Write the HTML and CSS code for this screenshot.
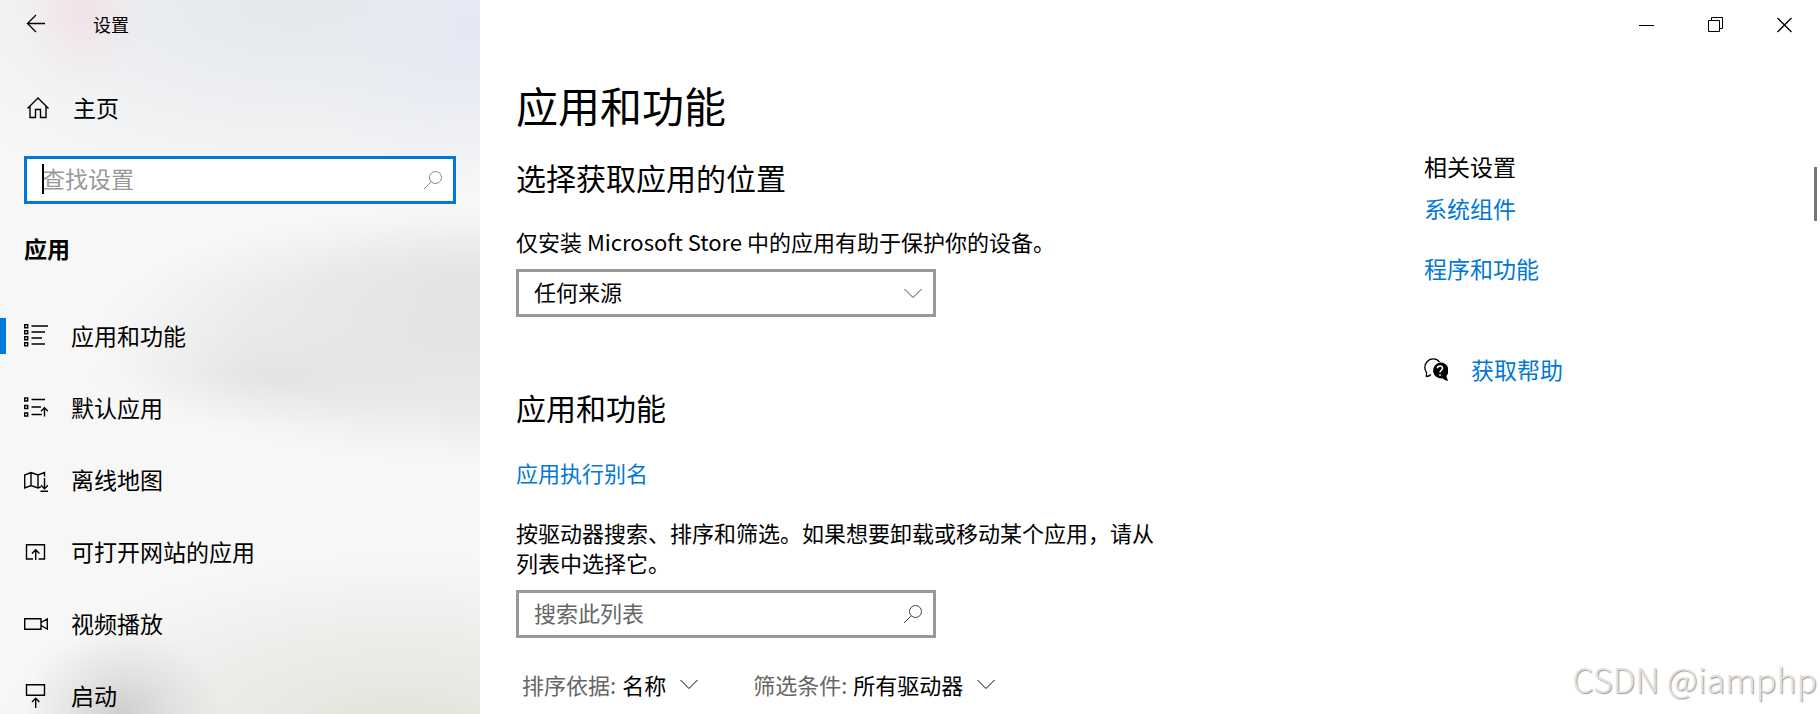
FILE: index.html
```html
<!DOCTYPE html>
<html lang="zh-CN">
<head>
<meta charset="utf-8">
<title>设置</title>
<link rel="stylesheet" href="styles.css">
</head>
<body>
<div class="window">
  <aside class="sidebar">
    <header class="titlebar">
      <button class="back" aria-label="返回">
        <svg class="icon" viewBox="0 0 24 24"><path d="M21 11.500H3.500M12 3L3.500 11.500L12 20" stroke-width="1.300"/></svg>
      </button>
      <span class="app-name">设置</span>
    </header>
    <a class="home" href="#">
      <svg class="icon" viewBox="0 0 24 24"><path d="M1.500 12.500L12 2L22.500 12.500M4 10.500V21.500H9.500V13.500H14.500V21.500H20V10.500"/></svg>
      <span>主页</span>
    </a>
    <div class="field field-active">
      <input type="text" aria-label="查找设置" placeholder="查找设置">
      <span class="caret"></span>
      <svg class="field-icon" viewBox="0 0 20 20"><circle cx="12.500" cy="7.500" r="6"/><path d="M8.200 11.800L1 19"/></svg>
    </div>
    <h2 class="group-title">应用</h2>
    <nav class="nav">
      <a class="nav-item current" href="#">
        <svg class="icon" viewBox="0 0 24 24"><path d="M.7.700h3v3h-3zM.7 6.700h3v3h-3zM.7 12.700h3v3h-3zM.7 18.700h3v3h-3zM7.500 2H24M7.500 8H21M7.500 14H18M7.500 20H21"/></svg>
        <span>应用和功能</span>
      </a>
      <a class="nav-item" href="#">
        <svg class="icon" viewBox="0 0 24 24"><path d="M.7 2h3v3h-3zM.7 9.500h3v3h-3zM.7 17h3v3h-3zM7.500 3.500H21M7.500 11H17M7.500 18.500H18M20.500 20.500V12M17 15.200L20.500 11.700L24 15.200"/></svg>
        <span>默认应用</span>
      </a>
      <a class="nav-item" href="#">
        <svg class="icon" viewBox="0 0 24 24"><path d="M20.500 8.500V4.500L14 7L7 4.500L.7 7V20L7 17.500L14 20L17 18.800M7 4.500V17.500M14 7V20M20.500 10V20.500M17 17.200L20.500 20.700L24 17.200M16.500 23.200H24"/></svg>
        <span>离线地图</span>
      </a>
      <a class="nav-item" href="#">
        <svg class="icon" viewBox="0 0 24 24"><path d="M9 19H2.500V4.700H20.500V19H14.500M11.700 20V10M8 13.500L11.700 9.800L15.400 13.500"/></svg>
        <span>可打开网站的应用</span>
      </a>
      <a class="nav-item" href="#">
        <svg class="icon" viewBox="0 0 24 24"><path d="M.7 6.700H17V17.300H.7zM17 10.500L23.300 7V17L17 13.500"/></svg>
        <span>视频播放</span>
      </a>
      <a class="nav-item" href="#">
        <svg class="icon" viewBox="0 0 24 24"><path d="M2.500.700H20.500V11.300H2.500zM11.700 24V15M8 18L11.700 14.300L15.400 18"/></svg>
        <span>启动</span>
      </a>
    </nav>
  </aside>

  <div class="page">
    <div class="controls">
      <button aria-label="最小化"><svg viewBox="0 0 16 16"><path d="M0 8.500H15"/></svg></button>
      <button aria-label="还原"><svg viewBox="0 0 16 16"><path d="M.5 3.500H11.500V14.500H.5zM3.500 3.500V.5H14.500V11.500H11.500"/></svg></button>
      <button aria-label="关闭"><svg viewBox="0 0 16 16"><path d="M.5 1L14.500 15M14.500 1L.5 15" stroke-width="1.300"/></svg></button>
    </div>
    <div class="columns">
      <main class="content">
        <h1>应用和功能</h1>
        <h2 class="section-title">选择获取应用的位置</h2>
        <label class="text source-label" for="source">仅安装 Microsoft Store 中的应用有助于保护你的设备。</label>
        <div class="field">
          <select id="source"><option>任何来源</option></select>
          <svg class="field-icon" viewBox="0 0 20 20"><path d="M1.500 6L10 14.500L18.500 6"/></svg>
        </div>
        <h2 class="section-title section-apps">应用和功能</h2>
        <a class="text link alias" href="#">应用执行别名</a>
        <label class="text hint" for="list-search">按驱动器搜索、排序和筛选。如果想要卸载或移动某个应用，请从列表中选择它。</label>
        <div class="field">
          <input id="list-search" type="text" placeholder="搜索此列表">
          <svg class="field-icon" viewBox="0 0 20 20"><circle cx="12.500" cy="7.500" r="6"/><path d="M8.200 11.800L1 19"/></svg>
        </div>
        <div class="filters">
          <label class="filter">排序依据:
            <select><option>名称</option></select>
            <svg viewBox="0 0 20 20"><path d="M1.500 6L10 14.500L18.500 6"/></svg>
          </label>
          <label class="filter">筛选条件:
            <select><option>所有驱动器</option></select>
            <svg viewBox="0 0 20 20"><path d="M1.500 6L10 14.500L18.500 6"/></svg>
          </label>
        </div>
      </main>
      <section class="related">
        <h2 class="related-title">相关设置</h2>
        <a class="text link" href="#">系统组件</a>
        <a class="text link" href="#">程序和功能</a>
        <a class="help link" href="#">
          <svg class="icon" viewBox="0 0 24 24"><path d="M2 18.500C2.600 17.200 2.900 16 2.500 14.500C.2 11.500.2 7 2.800 4C6-.2 12.500-.2 15.500 4M2 18.500C4.500 18.500 6 17.500 7 16.500" stroke-width="1.300"/><path class="solid" d="M16 4.500A8 8 0 1 0 18.500 20.300C20 21.700 22 22.800 24 23L22.300 18A8 8 0 0 0 16 4.500z"/><path class="mark" d="M13.500 10.300C13.500 7.200 18.500 7.300 18.500 10.200C18.500 12.200 16 12.300 16 14.500M16 16.200V17.800"/></svg>
          <span>获取帮助</span>
        </a>
      </section>
    </div>
  </div>
  <span class="scroll-thumb"></span>
  <span class="watermark">CSDN @iamphp</span>
</div>
</body>
</html>
```

FILE: styles.css
```css
* { box-sizing: border-box; }

body {
  margin: 0;
  color: #000;
  font-family: "Noto Sans CJK SC", sans-serif;
  font-size: 23px;
  line-height: 30px;
}

h1, h2 { margin: 0; font-weight: 400; }
a { color: inherit; text-decoration: none; }
button { border: 0; padding: 0; background: none; }
input, select { font: inherit; color: inherit; }
svg { display: block; fill: none; stroke: currentColor; stroke-width: 1; }

.window {
  position: relative;
  display: flex;
  height: 100vh;
  overflow: hidden;
  background: #fff;
}

.sidebar {
  flex: none;
  width: 480px;
  background:
    radial-gradient(ellipse 65px 75px at 82px 12px, rgba(244, 220, 227, 0.7), rgba(244, 220, 227, 0.25) 55%, rgba(244, 220, 227, 0)),
    radial-gradient(ellipse 170px 160px at 470px 30px, rgba(228, 232, 244, 0.9), rgba(228, 232, 244, 0.35) 55%, rgba(228, 232, 244, 0)),
    radial-gradient(ellipse 420px 200px at 300px 0, rgba(228, 232, 235, 1), rgba(231, 234, 238, 0.65) 50%, rgba(240, 241, 244, 0)),
    radial-gradient(ellipse 100px 85px at 122px 714px, rgba(200, 200, 200, 0.85), rgba(205, 205, 205, 0.4) 50%, rgba(215, 215, 215, 0)),
    radial-gradient(ellipse 400px 180px at 400px 735px, rgba(223, 226, 215, 0.95), rgba(226, 228, 221, 0.5) 55%, rgba(235, 236, 232, 0)),
    radial-gradient(ellipse 200px 60px at 480px 282px, rgba(222, 222, 222, 0.5), rgba(224, 224, 224, 0.2) 50%, rgba(226, 226, 226, 0)),
    radial-gradient(ellipse 180px 50px at 270px 376px, rgba(221, 221, 221, 0.55), rgba(223, 223, 223, 0.2) 50%, rgba(226, 226, 226, 0)),
    radial-gradient(ellipse 370px 125px at 470px 335px, rgba(227, 227, 227, 1), rgba(230, 230, 230, 0.75) 60%, rgba(238, 238, 238, 0)),
    #f7f7f7;
}

.icon { flex: none; width: 24px; height: 24px; stroke-width: 1.4px; }

.titlebar {
  display: flex;
  align-items: center;
  gap: 45px;
  height: 48px;
  padding-left: 24px;
  font-size: 18px;
}

.home {
  display: flex;
  align-items: center;
  gap: 23px;
  height: 72px;
  margin-top: 24px;
  padding-left: 26px;
}

.home span, .nav-item span, .help span { padding-bottom: 2px; }

.field { position: relative; width: 420px; height: 48px; }

.field input, .field select {
  width: 100%;
  height: 100%;
  padding: 0 48px 4px 15px;
  border: 3px solid #999;
  border-radius: 0;
  background: #fff;
  appearance: none;
  outline: 0;
}

.field input::placeholder { color: #666; opacity: 1; }

.field-icon {
  position: absolute;
  top: 14px;
  right: 13px;
  width: 20px;
  height: 20px;
  color: #444;
  pointer-events: none;
}

.field-active { width: auto; margin: 12px 24px 0; }
.field-active input { border-color: #0078d7; }
.field-active input::placeholder { color: #999; }
.field-active .field-icon { color: #888; }

.caret {
  position: absolute;
  top: 8px;
  left: 18px;
  width: 2px;
  height: 30px;
  background: #000;
}

.group-title {
  padding-left: 24px;
  font-size: 23px;
  font-weight: 700;
  line-height: 88px;
}

.nav { display: flex; flex-direction: column; padding-top: 8px; }

.nav-item {
  position: relative;
  display: flex;
  align-items: center;
  gap: 23px;
  height: 72px;
  padding-left: 24px;
}

.current::before {
  content: "";
  position: absolute;
  top: 18px;
  left: 0;
  width: 6px;
  height: 36px;
  background: #0078d7;
}

.page { flex: 1; display: flex; flex-direction: column; min-width: 0; }

.controls {
  display: flex;
  justify-content: flex-end;
  gap: 7px;
  height: 49px;
  padding-right: 4px;
}
.controls button { display: grid; place-items: center; width: 62px; }
.controls svg { width: 16px; height: 16px; }

.columns { display: flex; justify-content: space-between; padding-left: 36px; }

.content {
  display: flex;
  flex-direction: column;
  align-items: flex-start;
  width: 655px;
  padding-top: 26px;
  font-size: 22px;
}

h1 { font-size: 42px; line-height: 60px; }
.section-title { margin-top: 18px; font-size: 30px; line-height: 48px; }
.section-apps { margin-top: 66px; }
.source-label { margin: 25px 0 13px; }
.link { color: #0078d7; }
.alias { margin-top: 26px; }
.hint { margin: 30px 0 13px; }

.filters { display: flex; gap: 54px; margin-top: 31px; padding-left: 6px; }
.filter { display: flex; align-items: center; gap: 6px; color: #666; }
.filter select {
  padding: 0;
  border: 0;
  background: none;
  color: #000;
  appearance: none;
}
.filter svg { width: 20px; height: 20px; margin-left: 6px; color: #000; }

.related {
  display: flex;
  flex-direction: column;
  align-items: flex-start;
  width: 396px;
  padding-top: 102px;
}

.related-title { margin-bottom: 12px; font-size: 23px; line-height: 30px; }
.related .text { margin-bottom: 30px; }
.help { display: flex; align-items: center; gap: 23px; margin-top: 41px; }
.help .icon { color: #000; }
.solid { fill: #000; stroke: none; }
.mark { stroke: #fff; stroke-width: 1.6px; }

.scroll-thumb {
  position: absolute;
  top: 167px;
  right: 3px;
  width: 3px;
  height: 54px;
  background: #777;
}

.watermark {
  position: absolute;
  right: 3px;
  bottom: 11px;
  color: #e2e2e2;
  font-size: 34px;
  font-weight: 300;
  line-height: 48px;
  text-shadow: 1px 1px 1px #999;
}
```
